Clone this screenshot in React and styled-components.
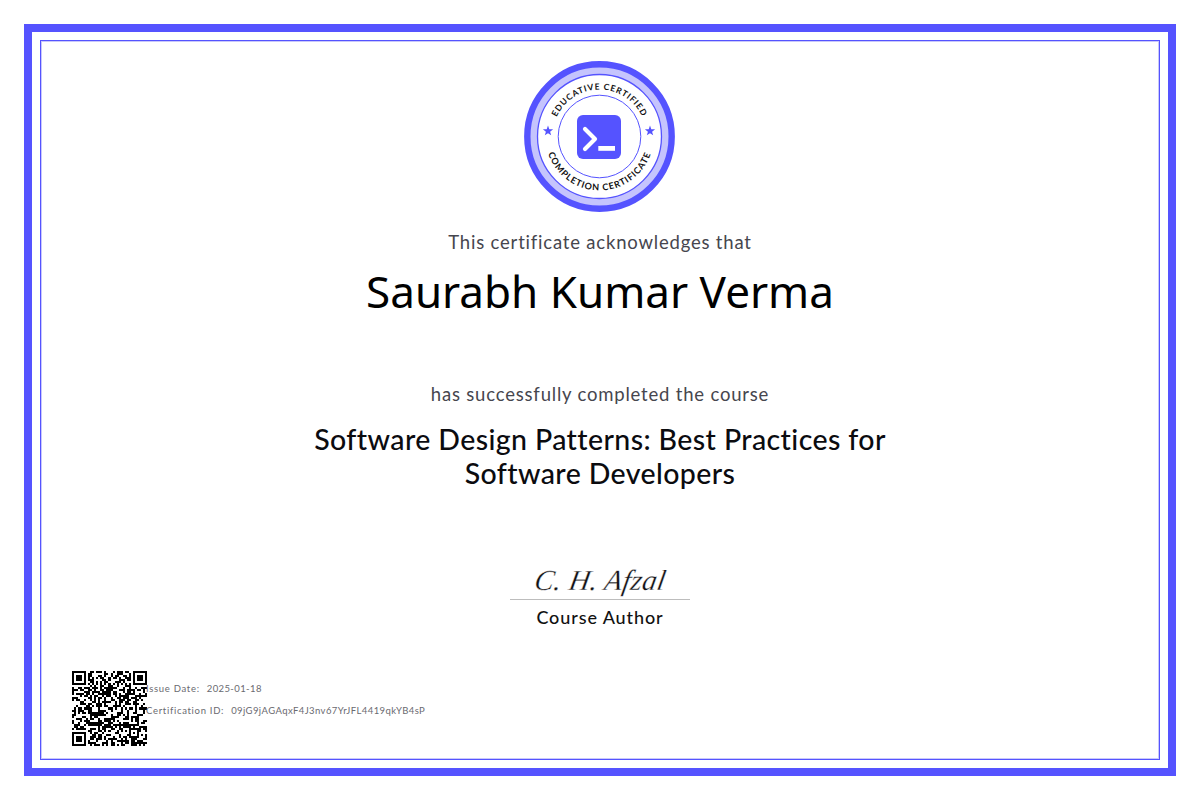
import React from 'react';
import styled, { createGlobalStyle } from 'styled-components';

const BLUE = '#5553ff';

const GlobalStyle = createGlobalStyle`
  html, body {
    margin: 0;
    padding: 0;
    background: #fff;
  }
  body {
    font-family: "Lato", "Open Sans", sans-serif;
  }
`;

const Page = styled.div`
  width: 1200px;
  height: 800px;
  padding: 24px;
  box-sizing: border-box;
`;

const OuterFrame = styled.div`
  height: 100%;
  box-sizing: border-box;
  border: 8px solid ${BLUE};
  padding: 8px;
`;

const InnerFrame = styled.div`
  height: 100%;
  box-sizing: border-box;
  border: 1px solid #5553ff;
  box-shadow: inset 0 0 0 1px #c9c8fb;
  display: flex;
  flex-direction: column;
  align-items: center;
  padding-top: 20px;
`;

const Badge = styled.svg`
  display: block;
  width: 152px;
  height: 152px;
  flex: none;
`;

const Lead = styled.p`
  margin: ${({ $top }) => $top}px 0 0;
  font-size: 18.5px;
  line-height: 22px;
  letter-spacing: 0.8px;
  color: #46464e;
`;

const Name = styled.h1`
  margin: 8px 0 0;
  font-family: "Noto Sans", sans-serif;
  font-weight: 400;
  font-size: 44px;
  line-height: 60px;
  color: #000;
`;

const CourseTitle = styled.h2`
  margin: 17px 0 0;
  width: 600px;
  text-align: center;
  font-weight: 500;
  font-size: 28.5px;
  line-height: 34px;
  letter-spacing: 0.4px;
  color: #0b0b0f;
`;

const SignBlock = styled.div`
  margin-top: 73px;
  width: 180px;
  display: flex;
  flex-direction: column;
  align-items: center;
`;

const Signature = styled.div`
  width: 100%;
  height: 36px;
  border-bottom: 1px solid #bdbdbd;
  text-align: center;
`;

const SignatureInk = styled.span`
  display: inline-block;
  font-family: "Liberation Serif", serif;
  font-style: italic;
  font-size: 29px;
  line-height: 35px;
  letter-spacing: 0.2px;
  color: #111114;
  -webkit-text-stroke: 0.3px #fff;
  transform: skewX(-10deg);
`;

const Role = styled.div`
  margin-top: 6px;
  font-weight: 500;
  font-size: 18px;
  line-height: 22px;
  letter-spacing: 0.9px;
  color: #111;
`;

const Footer = styled.div`
  margin-top: auto;
  align-self: stretch;
  display: flex;
  align-items: flex-start;
  padding: 0 0 13px 31px;
`;

const Qr = styled.svg`
  display: block;
  width: 75px;
  height: 75px;
  flex: none;
  shape-rendering: crispEdges;
`;

const Meta = styled.div`
  margin-left: -1px;
  padding-top: 11px;
  display: flex;
  flex-direction: column;
  gap: 7.5px;
`;

const MetaRow = styled.div`
  display: flex;
  gap: 7px;
  font-size: 9.5px;
  line-height: 14px;
  color: #6a6a70;
`;

const MetaLabel = styled.span`
  letter-spacing: 0.7px;
`;

const MetaValue = styled.span`
  letter-spacing: 0.4px;
`;

const Star = ({ x, y }) => {
  const pts = [];
  for (let i = 0; i < 10; i++) {
    const r = i % 2 ? 2.2 : 5.4;
    const a = -Math.PI / 2 + (i * Math.PI) / 5;
    pts.push(`${x + r * Math.cos(a)},${y + r * Math.sin(a)}`);
  }
  return <polygon points={pts.join(' ')} fill={BLUE} />;
};

function CertBadge() {
  return (
    <Badge viewBox="0 0 152 152">
      <defs>
        <path id="badgeTop" d="M 28.5 75.5 A 47 47 0 0 1 122.5 75.5" />
        <path id="badgeBottom" d="M 21.5 75.5 A 54 54 0 0 0 129.5 75.5" />
      </defs>
      <circle cx="75.5" cy="75.5" r="72.2" fill="#c5c4fd" stroke={BLUE} strokeWidth="6.4" />
      <circle cx="75.5" cy="75.5" r="62" fill="#fff" stroke={BLUE} strokeWidth="1.3" />
      <circle cx="75.5" cy="75.5" r="41.3" fill="#fff" stroke={BLUE} strokeWidth="1" />
      <text fontFamily="Lato, sans-serif" fontWeight="700" fontSize="8.5" letterSpacing="0.85" fill="#111">
        <textPath href="#badgeTop" startOffset="50%" textAnchor="middle">EDUCATIVE CERTIFIED</textPath>
      </text>
      <text fontFamily="Lato, sans-serif" fontWeight="700" fontSize="9" letterSpacing="0.85" fill="#111">
        <textPath href="#badgeBottom" startOffset="50%" textAnchor="middle">COMPLETION CERTIFICATE</textPath>
      </text>
      <Star x={24} y={70} />
      <Star x={126} y={70} />
      <rect x="53" y="54" width="44" height="44" rx="6" fill={BLUE} />
      <path d="M 61 68 L 71 78 L 61 88" fill="none" stroke="#fff" strokeWidth="4.2" strokeLinecap="round" strokeLinejoin="round" />
      <rect x="74.3" y="85" width="16.7" height="4.8" fill="#fff" />
    </Badge>
  );
}

// not a scan of the real code, just the same look: finders plus seeded noise
const QR_SIZE = 37;

function buildQr() {
  const cells = [];
  let seed = 0x2f6e2b1;
  for (let y = 0; y < QR_SIZE; y++) {
    const row = [];
    for (let x = 0; x < QR_SIZE; x++) {
      seed ^= seed << 13;
      seed ^= seed >>> 17;
      seed ^= seed << 5;
      row.push((seed >>> 3) % 100 < 52);
    }
    cells.push(row);
  }
  const finder = (ox, oy) => {
    for (let y = -1; y < 8; y++) {
      for (let x = -1; x < 8; x++) {
        const cx = ox + x;
        const cy = oy + y;
        if (cx < 0 || cy < 0 || cx >= QR_SIZE || cy >= QR_SIZE) continue;
        const ring = x >= 0 && x <= 6 && y >= 0 && y <= 6 && (x === 0 || x === 6 || y === 0 || y === 6);
        const core = x >= 2 && x <= 4 && y >= 2 && y <= 4;
        cells[cy][cx] = ring || core;
      }
    }
  };
  finder(0, 0);
  finder(QR_SIZE - 7, 0);
  finder(0, QR_SIZE - 7);
  for (let y = -2; y <= 2; y++) {
    for (let x = -2; x <= 2; x++) {
      const m = Math.max(Math.abs(x), Math.abs(y));
      cells[30 + y][30 + x] = m !== 1;
    }
  }
  for (let i = 8; i < QR_SIZE - 8; i++) {
    cells[6][i] = i % 2 === 0;
    cells[i][6] = i % 2 === 0;
  }
  return cells;
}

function QrCode() {
  const cells = buildQr();
  let d = '';
  cells.forEach((row, y) => row.forEach((on, x) => {
    if (on) d += `M${x} ${y}h1v1h-1z`;
  }));
  return (
    <Qr viewBox={`0 0 ${QR_SIZE} ${QR_SIZE}`}>
      <path d={d} fill="#000" />
    </Qr>
  );
}

export default function App() {
  return (
    <Page>
      <GlobalStyle />
      <OuterFrame>
        <InnerFrame>
          <CertBadge />
          <Lead $top={18}>This certificate acknowledges that</Lead>
          <Name>Saurabh Kumar Verma</Name>
          <Lead $top={62}>has successfully completed the course</Lead>
          <CourseTitle>Software Design Patterns: Best Practices for Software Developers</CourseTitle>
          <SignBlock>
            <Signature><SignatureInk>C. H. Afzal</SignatureInk></Signature>
            <Role>Course Author</Role>
          </SignBlock>
          <Footer>
            <QrCode />
            <Meta>
              <MetaRow><MetaLabel>Issue Date:</MetaLabel><MetaValue>2025-01-18</MetaValue></MetaRow>
              <MetaRow><MetaLabel>Certification ID:</MetaLabel><MetaValue>09jG9jAGAqxF4J3nv67YrJFL4419qkYB4sP</MetaValue></MetaRow>
            </Meta>
          </Footer>
        </InnerFrame>
      </OuterFrame>
    </Page>
  );
}
